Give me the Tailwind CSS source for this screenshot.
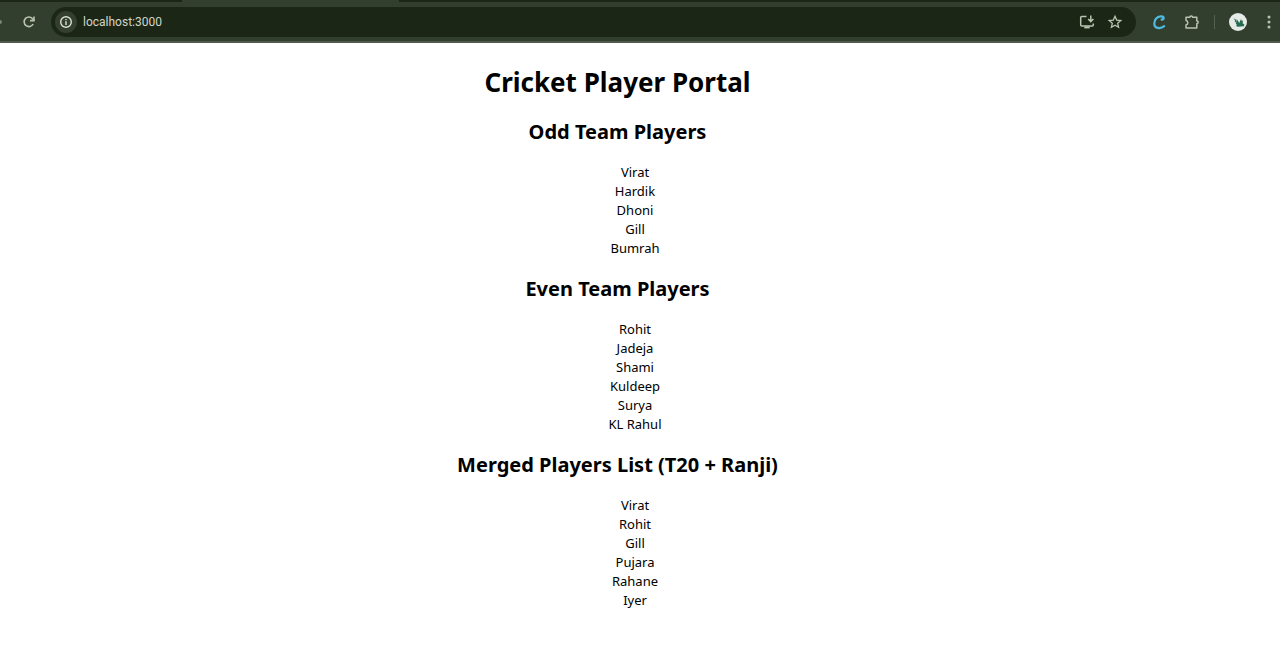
<!DOCTYPE html>
<html lang="en">
<head>
<meta charset="utf-8">
<title>Cricket Player Portal</title>
<script src="https://cdn.jsdelivr.net/npm/@tailwindcss/browser@4"></script>
</head>
<body class="min-h-screen bg-white font-['Segoe_UI','Noto_Sans',sans-serif] text-black">
<header class="border-b-2 border-[#52594d] bg-[#333f2e]">
  <div class="flex h-[2px] bg-[#1c2617]"><div class="ml-[182px] w-[217px] bg-[#333f2e]"></div></div>
  <div class="flex h-[39px] items-center overflow-hidden">
    <div class="h-1 w-[2px] rounded-r bg-[#7b8574]"></div>
    <button type="button" aria-label="Reload" class="ml-5 flex size-[14px] text-[#b9c4af]">
      <svg viewBox="0 0 14 14" class="size-[14px]" fill="none" stroke="currentColor" stroke-width="1.6"><path d="M11.2 9A4.8 4.8 0 1 1 10.8 3.9L12 5.4"/><path d="M12 1.6V5.6H8"/></svg>
    </button>
    <div class="ml-[15px] flex h-[30px] flex-1 items-center rounded-full bg-[#1c2617] pr-[13px] pl-1">
      <button type="button" aria-label="Site information" class="flex size-[22px] items-center justify-center rounded-full bg-[#343f2f] text-[#dce3d5]">
        <svg viewBox="0 0 14 14" class="size-[14px]" fill="none" stroke="currentColor" stroke-width="1.4"><circle cx="7" cy="7" r="5.3"/><path d="M7 6.3V10M7 4V5.3"/></svg>
      </button>
      <input type="text" aria-label="Address" value="localhost:3000" class="ml-[6px] min-w-0 flex-1 bg-transparent font-['Roboto',sans-serif] text-[12px] leading-5 text-[#cfd6c8] outline-none">
      <button type="button" aria-label="Install app" class="flex text-[#b9c4af]">
        <svg viewBox="0 0 16 16" class="size-4" fill="none" stroke="currentColor" stroke-width="1.5"><path d="M7.5 2.5H2.7Q1.7 2.5 1.7 3.5V11Q1.7 12 2.7 12H13.3Q14.3 12 14.3 11V9.5"/><path d="M5.3 13.4H10.7" stroke-width="2"/><path d="M11.8 1.5V7.4M9.2 5L11.8 7.6L14.4 5"/></svg>
      </button>
      <button type="button" aria-label="Bookmark this page" class="ml-3 flex text-[#b9c4af]">
        <svg viewBox="0 0 16 16" class="size-4" fill="none" stroke="currentColor" stroke-width="1.3"><path d="M8 2.3L9.7 6.1L13.8 6.5L10.7 9.3L11.6 13.3L8 11.2L4.4 13.3L5.3 9.3L2.2 6.5L6.3 6.1Z"/></svg>
      </button>
    </div>
    <button type="button" aria-label="Extension" class="ml-[15px] flex text-[#4dbce0]">
      <svg viewBox="0 0 16 16" class="size-4" fill="none" stroke="currentColor" stroke-width="2.2" stroke-linecap="round"><path d="M10.6 5.6C13.4 5.2 13.4 2.2 9.8 2.4C5.6 2.6 3.3 6 3.3 9.4C3.3 14.8 9.4 15.2 13.2 12.2"/></svg>
    </button>
    <button type="button" aria-label="Extensions" class="ml-[17px] flex text-[#b9c4af]">
      <svg viewBox="0 0 16 16" class="size-4" fill="none" stroke="currentColor" stroke-width="1.5" stroke-linejoin="round"><path d="M2 3.3H5.8A1.4 1.4 0 0 1 8.6 3.3H12.8V6.9A1.4 1.4 0 0 1 12.8 9.7V14H2V10.9A2.3 2.3 0 0 0 2 6.4Z"/></svg>
    </button>
    <div class="ml-[14px] h-[14px] w-px bg-[#53604c]"></div>
    <button type="button" aria-label="Profile" class="ml-[14px] flex">
      <svg viewBox="0 0 18 18" class="size-[18px]"><circle cx="9" cy="9" r="9" fill="#e6ebe7"/><path d="M4.4 5L7 6.8L8.1 9.4L7.5 5.8L9.4 8.4L10.2 10L12 6L12.8 8L14 7.6L13.6 10.2L15.4 11.5L14.8 13.3L8.5 13.8L6.8 12.8L8.2 12L6.7 10.7L7.3 9.8L5.8 8.5L6 7.3Z" fill="#266b50"/></svg>
    </button>
    <button type="button" aria-label="Menu" class="mr-[3px] ml-[14px] flex text-[#b9c4af]">
      <svg viewBox="0 0 16 16" class="size-4" fill="currentColor"><circle cx="8" cy="3" r="1.5"/><circle cx="8" cy="8" r="1.5"/><circle cx="8" cy="13" r="1.5"/></svg>
    </button>
  </div>
</header>
<main class="mr-[45px] pt-5 pb-8 text-center">
  <h1 class="text-[26px] leading-[38px] font-bold">Cricket Player Portal</h1>
  <h2 class="my-[17px] text-[20px] leading-7 font-bold">Odd Team Players</h2>
  <ul class="pl-[35px] text-[13px] leading-[19px]">
    <li>Virat</li><li>Hardik</li><li>Dhoni</li><li>Gill</li><li>Bumrah</li>
  </ul>
  <h2 class="my-[17px] text-[20px] leading-7 font-bold">Even Team Players</h2>
  <ul class="pl-[35px] text-[13px] leading-[19px]">
    <li>Rohit</li><li>Jadeja</li><li>Shami</li><li>Kuldeep</li><li>Surya</li><li>KL Rahul</li>
  </ul>
  <h2 class="my-[17px] text-[20px] leading-7 font-bold">Merged Players List (T20 + Ranji)</h2>
  <ul class="pl-[35px] text-[13px] leading-[19px]">
    <li>Virat</li><li>Rohit</li><li>Gill</li><li>Pujara</li><li>Rahane</li><li>Iyer</li>
  </ul>
</main>
</body>
</html>
